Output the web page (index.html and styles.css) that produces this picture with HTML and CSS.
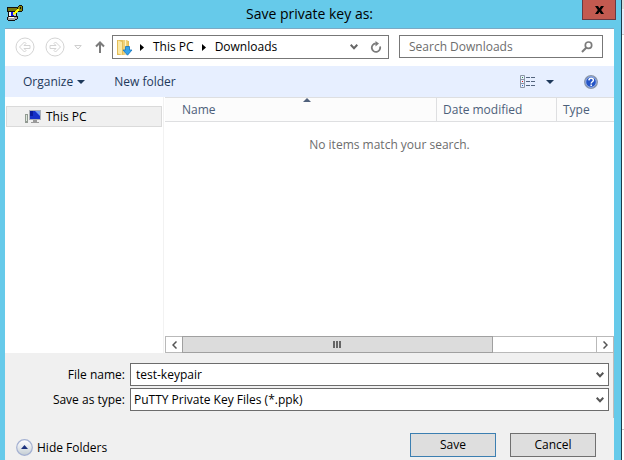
FILE: index.html
```html
<!DOCTYPE html>
<html lang="en">
<head>
<meta charset="utf-8">
<title>Save private key as:</title>
<link rel="stylesheet" href="styles.css">
</head>
<body>
<div class="desktop">
<main class="window">
  <header class="titlebar">
    <svg class="app-icon" width="16" height="16" viewBox="0 0 16 16" shape-rendering="crispEdges" aria-hidden="true">
      <path d="M0 2h11v4h-1v5h1v3h-1v1H8v1H1v-1H0v-3h1V7H0z" fill="#111"/>
      <path d="M1 3h9v3H1z" fill="#77770a"/>
      <path d="M2 7h7v4H2z" fill="#c9c9c9"/>
      <path d="M2 7h2v4H2z" fill="#f4f4f4"/>
      <path d="M4 7h2v2h1v2H4z" fill="#1212e8"/>
      <path d="M1 12h9v2H8v1H1z" fill="#a8a8a8"/>
      <path d="M2 12h5v1H2z" fill="#fff"/>
      <path d="M12 0h3v1h1v5h-1v1h-4V6h-1V2h1V1h1z" fill="#111"/>
      <path d="M12 1h3v5h-3V5h-1V2h1z" fill="#8a8a0c"/>
      <path d="M13 2h1v2h-1z" fill="#111"/>
      <path d="M10 4h2v2h-1v1h-1v1H9v1H7v1H6V8h1V7h1V6h1V5h1z" fill="#ffff00"/>
    </svg>
    <h1>Save private key as:</h1>
    <button class="close" type="button" aria-label="Close">
      <svg width="9" height="8" viewBox="0 0 9 8"><path d="M0 0h3l1.500 2.200L6 0h3L6.200 4 9 8H6L4.500 5.800 3 8H0l2.800-4z" fill="#000"/></svg>
    </button>
  </header>
  <nav class="navbar">
    <button class="icon-btn" type="button" aria-label="Back">
      <svg width="20" height="20" viewBox="0 0 20 20" fill="none" stroke="#d4d4d4"><circle cx="10" cy="10" r="9"/><path d="M4.500 10l5-5 1.500 1.500L9 8.500h6v3H9l2 2L9.500 15z"/></svg>
    </button>
    <button class="icon-btn forward" type="button" aria-label="Forward">
      <svg width="20" height="20" viewBox="0 0 20 20" fill="none" stroke="#d4d4d4"><circle cx="10" cy="10" r="9"/><path d="M15.500 10l-5-5L9 6.500l2 2H5v3h6l-2 2 1.500 1.500z"/></svg>
    </button>
    <button class="icon-btn recent" type="button" aria-label="Recent locations">
      <svg width="8" height="5" viewBox="0 0 8 5" fill="none" stroke="#cecece"><path d="M.8.5h6.400L4 4z"/></svg>
    </button>
    <button class="icon-btn up" type="button" aria-label="Up">
      <svg width="10" height="12" viewBox="0 0 10 12" fill="none" stroke="#7b7b7b" stroke-width="2"><path d="M5 12V2M1 5.500l4-4 4 4"/></svg>
    </button>
    <div class="address">
      <svg class="folder" width="16" height="17" viewBox="0 0 16 17" aria-hidden="true">
        <path d="M0 1h5l7 1v13l-7 1H0z" fill="#e3bd58"/>
        <path d="M1 1.500l4 1.500v13l-4-1.500z" fill="#fbe9a6"/>
        <path d="M6 1h4.500v14H6z" fill="#f0d27a"/>
        <path d="M8 1h1v14H8z" fill="#fff3c4"/>
        <path d="M8.500 7.500h4V11H15l-4.500 5.200L6 11h2.500z" fill="#36a3ea" stroke="#1673bd" stroke-width=".8"/>
      </svg>
      <svg class="crumb-arrow" width="4" height="7" viewBox="0 0 4 7"><path d="M0 0l4 3.500L0 7z" fill="#000"/></svg>
      <a href="#this-pc">This PC</a>
      <svg class="crumb-arrow" width="4" height="7" viewBox="0 0 4 7"><path d="M0 0l4 3.500L0 7z" fill="#000"/></svg>
      <a href="#downloads">Downloads</a>
      <button class="icon-btn history" type="button" aria-label="Previous locations">
        <svg width="8" height="6" viewBox="0 0 8 6" fill="none" stroke="#666" stroke-width="2"><path d="M.7.8L4 4.300 7.300.8"/></svg>
      </button>
      <button class="icon-btn" type="button" aria-label="Refresh">
        <svg width="12" height="12" viewBox="0 0 12 12" fill="none"><path d="M10 5.500a4.200 4.200 0 1 1-4.200-3" stroke="#7b7b7b" stroke-width="1.800"/><path d="M5.500 0v5.500L9 2.500z" fill="#7b7b7b"/></svg>
      </button>
    </div>
    <div class="search">
      <input type="search" aria-label="Search Downloads" placeholder="Search Downloads">
      <svg width="12" height="12" viewBox="0 0 12 12" fill="none" stroke="#7b7b7b"><circle cx="7.500" cy="4.200" r="3.200" stroke-width="1.700"/><path d="M5.200 6.700L1 11" stroke-width="2"/></svg>
    </div>
  </nav>
  <div class="toolbar">
    <button class="tool" type="button">Organize <svg width="8" height="4" viewBox="0 0 8 4"><path d="M0 0h8L4 4z" fill="#1e395b"/></svg></button>
    <button class="tool new-folder" type="button">New folder</button>
    <button class="tool view" type="button" aria-label="Change your view">
      <svg width="16" height="14" viewBox="0 0 16 14" fill="none">
        <path d="M.5.5h4v12h-4zM.5 4.500h4M.5 8.500h4" stroke="#8b96a6"/>
        <path d="M6 2.500h4m1 0h4M6 6.500h4m1 0h4M6 10.500h4m1 0h4" stroke="#54657e"/>
        <path d="M2 2h1v1H2z" fill="#36923b"/><path d="M2 6h1v1H2z" fill="#e01010"/><path d="M2 10h1v1H2z" fill="#2a68c8"/>
      </svg>
      <svg width="8" height="4" viewBox="0 0 8 4"><path d="M0 0h8L4 4z" fill="#1e395b"/></svg>
    </button>
    <button class="tool help" type="button" aria-label="Help">
      <svg width="14" height="14" viewBox="0 0 14 14" fill="none">
        <circle cx="7" cy="7" r="6.300" fill="#2454c6" stroke="#8c97a8" stroke-width="1.300"/>
        <circle cx="7" cy="7" r="5.300" stroke="#c5d5f3" stroke-width=".7"/>
        <path d="M4.900 5.400C5 3.900 6 3.300 7.200 3.300c1.300 0 2.200.8 2.200 1.900C9.400 6.700 7.200 6.800 7.200 8.500M7.200 9.600v1.500" stroke="#fff" stroke-width="1.500"/>
      </svg>
    </button>
  </div>
  <section class="browser">
    <aside class="tree">
      <a class="tree-item" href="#this-pc">
        <svg width="17" height="14" viewBox="0 0 17 14" aria-hidden="true">
          <path d="M4 0h12v10H4z" fill="#aab0b8"/>
          <path d="M5 1h10v8H5z" fill="#1431c8"/>
          <path d="M10 1h5v5z" fill="#729cf2"/>
          <path d="M5 1h3v5H5z" fill="#071b9c"/>
          <path d="M8 10h4v2h2v1H6v-1h2z" fill="#9a9a9a"/>
          <path d="M0 4h3v9H0z" fill="#929a92"/><path d="M1 5h1v6H1z" fill="#dce8dc"/>
        </svg>
        This PC
      </a>
    </aside>
    <div class="listing">
      <table class="files">
        <thead><tr>
          <th class="name" scope="col" aria-sort="ascending">Name<svg class="sort" width="8" height="4" viewBox="0 0 8 4"><path d="M4 0l4 4H0z" fill="#50617c"/></svg></th>
          <th class="date" scope="col">Date modified</th>
          <th class="type" scope="col">Type</th>
        </tr></thead>
        <tbody><tr><td colspan="3">No items match your search.</td></tr></tbody>
      </table>
      <div class="scrollbar">
        <button type="button" aria-label="Scroll left"><svg width="5" height="8" viewBox="0 0 5 8" fill="none" stroke="#555" stroke-width="1.500"><path d="M4.500.5L1 4l3.500 3.500"/></svg></button>
        <div class="track"><div class="thumb"><i></i><i></i><i></i></div></div>
        <button type="button" aria-label="Scroll right"><svg width="5" height="8" viewBox="0 0 5 8" fill="none" stroke="#555" stroke-width="1.500"><path d="M.5.5L4 4 .5 7.500"/></svg></button>
      </div>
    </div>
  </section>
  <form class="details">
    <div class="fields">
      <label for="file-name">File name:</label>
      <div class="combo">
        <input id="file-name" type="text" value="test-keypair">
        <button class="icon-btn" type="button" aria-label="Show recent names"><svg width="8" height="6" viewBox="0 0 8 6" fill="none" stroke="#555" stroke-width="2"><path d="M.7.8L4 4.300 7.300.8"/></svg></button>
      </div>
      <label for="file-type">Save as type:</label>
      <div class="combo">
        <select id="file-type"><option>PuTTY Private Key Files (*.ppk)</option></select>
        <svg width="8" height="6" viewBox="0 0 8 6" fill="none" stroke="#555" stroke-width="2"><path d="M.7.8L4 4.300 7.300.8"/></svg>
      </div>
    </div>
    <div class="actions">
      <button class="hide" type="button">
        <svg width="17" height="17" viewBox="0 0 17 17">
          <defs><linearGradient id="knob" x1="0" y1="0" x2="0" y2="1"><stop offset="0" stop-color="#fff"/><stop offset=".5" stop-color="#e4e8ec"/><stop offset="1" stop-color="#c2ccd2"/></linearGradient></defs>
          <circle cx="8.500" cy="8.500" r="7.800" fill="url(#knob)" stroke="#a4b1d2" stroke-width="1.200"/>
          <path d="M8.500 6L12 10H5z" fill="#1c327e"/>
        </svg>
        Hide Folders
      </button>
      <button class="push primary" type="submit">Save</button>
      <button class="push" type="button">Cancel</button>
    </div>
  </form>
</main>
<div class="backdrop"></div>
</div>
</body>
</html>
```
FILE: styles.css
```css
* {
  box-sizing: border-box;
}

body {
  margin: 0;
  background: #fff;
  color: #000;
  font: 12px/16px "Open Sans", "Noto Sans", sans-serif;
}

button,
input,
select {
  margin: 0;
  padding: 0;
  border: 0;
  border-radius: 0;
  background: none;
  color: inherit;
  font: inherit;
}

a {
  color: inherit;
  text-decoration: none;
}

svg {
  display: block;
  flex: none;
}

.desktop {
  display: flex;
  min-height: 100vh;
}

.window {
  flex: 1;
  min-width: 0;
  display: flex;
  flex-direction: column;
  padding: 0 7px 0 5px;
  background: #66caea;
  border-right: 1px solid #1c3c4c;
}

.backdrop {
  width: 2px;
  background: linear-gradient(#dcdcdc 9px, #f4f4f4 9px 10px, #e6edfd 10px 34px, #c8c8c8 34px 35px, #fff 35px 429px, #c8c8c8 429px 430px, #fff 430px);
}

.titlebar {
  position: relative;
  display: flex;
  justify-content: center;
  height: 29px;
  border-bottom: 1px solid #7ba9c4;
}

.titlebar h1 {
  margin: 0;
  font-size: 14px;
  font-weight: 400;
  line-height: 28px;
}

.app-icon {
  position: absolute;
  left: 2px;
  top: 5px;
}

.close {
  position: absolute;
  top: 0;
  right: -2px;
  display: grid;
  place-items: center;
  width: 34px;
  height: 20px;
  background: #c35a50;
  border: 1px solid #693a42;
  border-top: 0;
}

.icon-btn {
  flex: none;
  display: grid;
  place-items: center;
}

.navbar {
  display: flex;
  align-items: center;
  padding: 6px 11px 7px 10px;
  background: #fff;
}

.forward {
  margin-left: 10px;
}

.recent {
  margin-left: 9px;
}

.up {
  margin: 0 7px 0 13px;
}

.address {
  flex: 1;
  display: flex;
  align-items: center;
  height: 24px;
  padding: 0 6px 0 4px;
  border: 1px solid #777;
}

.crumb-arrow {
  margin: 0 9px 0 8px;
}

.folder + .crumb-arrow {
  margin-left: 7px;
}

.history {
  margin: 0 12px 0 auto;
}

.search {
  width: 204px;
  display: flex;
  align-items: center;
  align-self: flex-start;
  height: 23px;
  margin-left: 10px;
  padding: 0 9px;
  border: 1px solid #777;
}

.search input {
  flex: 1;
  min-width: 0;
}

.search input::placeholder {
  color: #6d6d6d;
  opacity: 1;
}

.toolbar {
  display: flex;
  align-items: center;
  height: 31px;
  padding: 0 16px 0 18px;
  background: #e7efff;
  color: #1e395b;
}

.tool {
  display: flex;
  align-items: center;
  gap: 4px;
}

.new-folder {
  margin-left: 29px;
}

.view {
  gap: 10px;
  margin-left: auto;
}

.help {
  margin-left: 30px;
}

.browser {
  flex: 1;
  display: flex;
  background: #fff;
}

.tree {
  width: 159px;
  padding: 9px 1px 0;
  border-right: 1px solid #f2f2f2;
}

.tree-item {
  display: flex;
  align-items: center;
  gap: 4px;
  height: 21px;
  padding-left: 18px;
  background: #f0f0f0;
  border: 1px solid #dadada;
}

.listing {
  flex: 1;
  display: flex;
  flex-direction: column;
  justify-content: space-between;
  margin-left: 1px;
}

.files {
  width: 100%;
  table-layout: fixed;
  border-collapse: separate;
  border-spacing: 0;
}

.files th {
  position: relative;
  height: 25px;
  padding: 0 0 0 6px;
  background: #fcfcfc;
  border-top: 1px solid #dedfe1;
  border-bottom: 1px solid #dedfe1;
  border-left: 1px solid #dedfe1;
  color: #4c607a;
  font-weight: 400;
  text-align: left;
}

.files .name {
  padding-left: 17px;
  border-left: 0;
}

.files .date {
  width: 120px;
}

.files .type {
  width: 58px;
}

.sort {
  position: absolute;
  top: 0;
  left: calc(50% + 2px);
}

.files td {
  padding: 15px 0 0;
  color: #6d6d6d;
  text-align: center;
}

.scrollbar {
  display: flex;
  height: 17px;
  border: 1px solid #b9b9b9;
}

.scrollbar button {
  display: grid;
  place-items: center;
  width: 16px;
}

.track {
  flex: 1;
  border-right: 1px solid #b9b9b9;
}

.thumb {
  display: flex;
  justify-content: center;
  align-items: center;
  gap: 1px;
  width: 75%;
  height: 17px;
  margin-top: -1px;
  background: #dcdcdc;
  border: 1px solid #a0a0a0;
}

.thumb i {
  width: 2px;
  height: 7px;
  background: #666;
}

.details {
  height: 107px;
  background: #f0f0f0;
}

.fields {
  display: grid;
  grid-template-columns: 120px 1fr;
  gap: 2px 5px;
  height: 65px;
  padding: 10px 4px 0 0;
  grid-auto-rows: 23px;
  align-items: center;
  border-right: 1px solid #bdbdbd;
}

.fields label {
  text-align: right;
}

.combo {
  position: relative;
  display: flex;
  align-items: center;
  height: 23px;
  background: #fff;
  border: 1px solid #6c6c6c;
}

.combo input {
  flex: 1;
  min-width: 0;
  padding-left: 5px;
}

.combo .icon-btn {
  padding-right: 4px;
}

.combo select {
  flex: 1;
  height: 21px;
  padding-left: 3px;
  appearance: none;
}

.combo > svg {
  position: absolute;
  right: 4px;
  pointer-events: none;
}

.actions {
  display: flex;
  align-items: flex-end;
  gap: 14px;
  padding: 15px 18px 0 11px;
}

.hide {
  display: flex;
  align-items: center;
  gap: 4px;
  margin-right: auto;
  padding-bottom: 1px;
}

.push {
  width: 86px;
  height: 24px;
  background: #dedede;
  border: 1px solid #707070;
}

.primary {
  border-color: #3c7fb1;
}
```
